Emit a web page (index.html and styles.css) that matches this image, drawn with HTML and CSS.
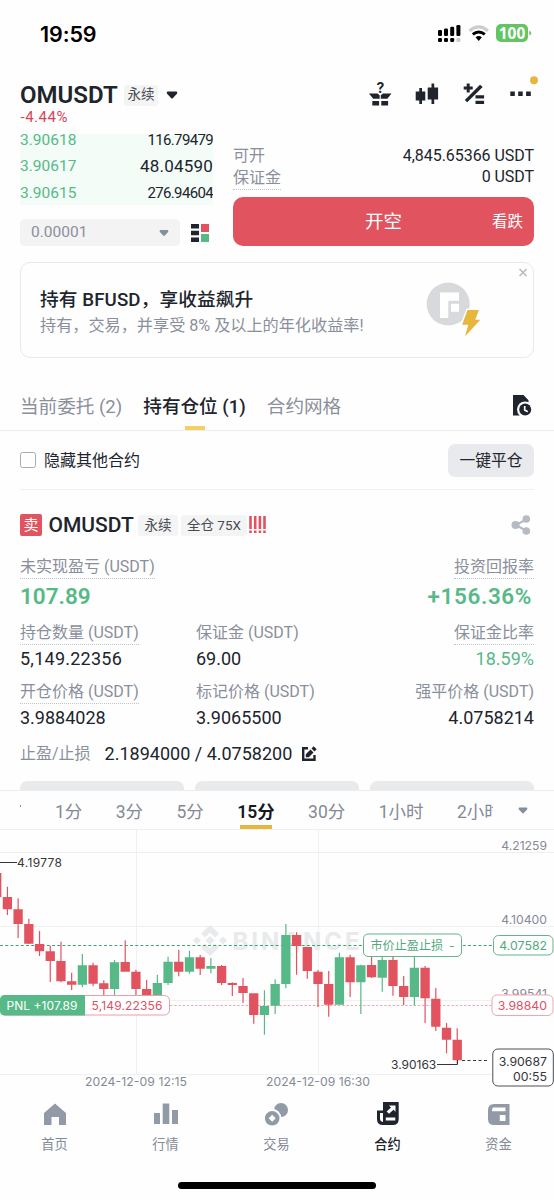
FILE: index.html
```
<!DOCTYPE html>
<html lang="zh-CN">
<head>
<meta charset="utf-8">
<title>OMUSDT 永续</title>
<link rel="stylesheet" href="styles.css">
</head>
<body>
<div class="screen">
  <div class="status">
    <span class="time">19:59</span>
    <svg class="status-icons" viewBox="436 22 98 22" width="98" height="22">
      <g fill="#000"><rect x="438" y="30" width="4" height="6" rx="1.2"/><rect x="444" y="28.5" width="4" height="7.5" rx="1.2"/><rect x="450.200" y="26.800" width="4" height="9.200" rx="1.2"/><rect x="456.400" y="25" width="4" height="11" rx="1.2"/><rect x="438" y="38" width="4" height="4" rx="1.2"/><rect x="444" y="38" width="4" height="4" rx="1.2"/><rect x="450.200" y="38" width="4" height="4" rx="1.2"/></g>
      <rect x="456.400" y="38" width="4" height="4" rx="1.2" fill="#ccc"/>
      <path d="M469.500 30.800Q478.700 23 488 30.800" fill="none" stroke="#ccc" stroke-width="3"/>
      <path d="M472.800 34.400Q478.700 29.600 484.800 34.400" fill="none" stroke="#000" stroke-width="3"/>
      <path d="M475.600 37.200Q478.700 35 481.900 37.200L478.700 41Z"/>
      <rect x="496" y="24" width="32" height="18" rx="5" fill="#62c462"/>
      <path d="M529.300 30.500q2 1 2 2.500t-2 2.500z" fill="#62c462"/>
      <text class="battery" x="512" y="38.700" text-anchor="middle">100</text>
    </svg>
  </div>

  <header class="header">
    <div class="pair">
      <div class="pair-row">
        <h1>OMUSDT</h1><span class="tag">永续</span>
        <svg class="pair-caret" width="12" height="8" viewBox="0 0 12 8"><path d="M1.500.5h9q1.500 1 .4 2.300L7 7Q6 8 5 7L1.100 2.800Q0 1.500 1.500.5z" fill="#20242c"/></svg>
      </div>
      <div class="change">-4.44%</div>
    </div>
    <div class="actions">
      <svg viewBox="368 81 24 26" width="24" height="26"><text class="gift-q" x="380.500" y="93" text-anchor="middle">?</text><g fill="#20242c"><path d="M369 93.500h8.500l2.200 1.800v3.500h-6.500z"/><path d="M391.500 93.500H383l-2.200 1.800v3.500h6.500z"/><rect x="372.300" y="101" width="6.800" height="4.500"/><rect x="381.300" y="101" width="6.800" height="4.500"/></g></svg>
      <svg viewBox="415 81 24 26" width="24" height="26"><path fill="#20242c" d="M415.700 91.500h3.600V88h2.700v3.500h3.300v9H422v3.500h-2.700v-3.500h-3.600zM427.700 87.500h3.800v-4h2.700v4h3.900v12h-3.900v4.500h-2.700v-4.500h-3.800z"/></svg>
      <svg viewBox="462 81 24 26" width="24" height="26"><path fill="#20242c" d="M466.700 83.500h3v3h3v3h-3v3h-3v-3h-3v-3h3zM480 84.800l2.700 2.300-15.500 15.200-2.400-2.200zM475.500 95.300h8.600v3.200h-8.600zM475.500 100.700h8.600v3.200h-8.600z"/></svg>
      <svg viewBox="509 81 24 26" width="24" height="26"><path fill="#20242c" d="M510.300 91.500h4.500V96h-4.500zM518.200 91.500h4.500V96h-4.500zM526.100 91.500h4.700V96h-4.700z"/><circle cx="534" cy="80.300" r="4" fill="#e6b73c"/></svg>
    </div>
  </header>

  <section class="trade">
    <div class="book">
      <div class="bids">
        <div class="bid"><span class="price">3.90618</span><span class="qty">116.79479</span></div>
        <div class="bid"><span class="price">3.90617</span><span class="qty large">48.04590</span></div>
        <div class="bid"><span class="price">3.90615</span><span class="qty">276.94604</span></div>
      </div>
      <div class="depth">
        <div class="precision"><span>0.00001</span><svg width="10" height="8" viewBox="0 0 12 8"><path d="M1.500.5h9q1.500 1 .4 2.300L7 7Q6 8 5 7L1.100 2.800Q0 1.500 1.500.5z" fill="#848e9c"/></svg></div>
        <svg width="18" height="18" viewBox="0 0 18 18"><path fill="#20242c" d="M0 0h8v4.500H0zM0 6.700h8v4.600H0zM0 13.500h8V18H0z"/><path fill="#e25360" d="M10 0h8v8h-8z"/><path fill="#57b987" d="M10 10h8v8h-8z"/></svg>
      </div>
    </div>
    <div class="order">
      <div class="order-row"><span class="muted">可开</span><span>4,845.65366 USDT</span></div>
      <div class="order-row"><span class="muted dotted">保证金</span><span>0 USDT</span></div>
      <div class="short-button"><span></span><span class="short-main">开空</span><span class="short-side">看跌</span></div>
    </div>
  </section>

  <section class="promo">
    <div class="promo-text"><div class="promo-title">持有 BFUSD，享收益飙升</div><div class="promo-sub">持有，交易，并享受 8% 及以上的年化收益率!</div></div>
    <svg class="promo-art" viewBox="424 264 106 92" width="106" height="92">
      <circle cx="448.200" cy="304" r="21.500" fill="#d8d9dc"/>
      <path fill="#fff" d="M440 292.500h19v8.200h-10.700V318H440zM451 303.800h8v8h-8z"/>
      <path fill="#e6b73c" stroke="#fff" stroke-width="3" paint-order="stroke" d="M467.500 310h11.400l-3.600 9.700h5L465 336.500l3.300-11.700h-6.200z"/>
      <path stroke="#b5bac3" stroke-width="1.500" d="M519.500 269l7 7M526.500 269l-7 7"/>
    </svg>
  </section>

  <nav class="tabs">
    <span>当前委托 (2)</span><span class="active">持有仓位 (1)</span><span>合约网格</span>
    <svg class="history" viewBox="511 394 20 23" width="20" height="23"><path fill="#20242c" d="M512 395h10.500l5 5.300v8H527v7.200H512z"/><circle cx="524" cy="409.500" r="8" fill="#fff"/><circle cx="524.200" cy="409.500" r="6" fill="#20242c"/><path d="M523.700 406v4l3 1.700" fill="none" stroke="#fff" stroke-width="1.700"/></svg>
  </nav>

  <div class="filter"><span class="checkbox"></span><span>隐藏其他合约</span><span class="close-all">一键平仓</span></div>

  <section class="position">
    <div class="pos-head">
      <span class="sell">卖</span><span class="pos-name">OMUSDT</span><span class="tag">永续</span><span class="tag lever">全仓 75X</span>
      <svg width="17" height="18" viewBox="0 0 17 18"><path stroke="#e25360" stroke-width="2.600" d="M1.500 0v13M6.200 0v13M10.900 0v13M15.500 0v13M1.500 14.500v2.500M6.200 14.500v2.500M10.900 14.500v2.500M15.500 14.500v2.500"/></svg>
      <svg class="share" width="20" height="20" viewBox="0 0 20 20"><path d="M15.500 4.500L4.500 10l11 5.800" fill="none" stroke="#b5bac3" stroke-width="2.200"/><g fill="#b5bac3"><circle cx="15.300" cy="4" r="3.800"/><circle cx="4.500" cy="10" r="4"/><circle cx="15.300" cy="16" r="3.800"/></g></svg>
    </div>
    <div class="stats top">
      <div class="stat"><span class="label dotted">未实现盈亏 (USDT)</span><span class="value pnl">107.89</span></div>
      <div class="stat right"><span class="label dotted">投资回报率</span><span class="value pnl roi">+156.36%</span></div>
    </div>
    <div class="stats">
      <div class="stat"><span class="label dotted">持仓数量 (USDT)</span><span class="value wide">5,149.22356</span></div>
      <div class="stat"><span class="label">保证金 (USDT)</span><span class="value">69.00</span></div>
      <div class="stat right"><span class="label dotted">保证金比率</span><span class="value up">18.59%</span></div>
    </div>
    <div class="stats">
      <div class="stat"><span class="label dotted">开仓价格 (USDT)</span><span class="value">3.9884028</span></div>
      <div class="stat"><span class="label">标记价格 (USDT)</span><span class="value">3.9065500</span></div>
      <div class="stat right"><span class="label">强平价格 (USDT)</span><span class="value">4.0758214</span></div>
    </div>
    <div class="tpsl"><span class="muted">止盈/止损</span><span class="tpsl-value">2.1894000 / 4.0758200</span>
      <svg width="16" height="16" viewBox="0 0 16 16"><path fill="none" stroke="#20242c" stroke-width="2.400" d="M7 2.200H2.200v11.600h11.300V9"/><path fill="#20242c" d="M4.800 11.200v-3l4.700-4.700 3 3-4.700 4.700zM10.500 2.500L12.700.3l3 3-2.200 2.200z"/></svg>
    </div>
    <div class="pos-buttons"><i></i><i></i><i></i></div>
  </section>

  <div class="intervals">
    <i class="tick"></i>
    <div class="interval-list"><span>1分</span><span>3分</span><span>5分</span><span class="active">15分</span><span>30分</span><span>1小时</span><span>2小时</span></div>
    <svg width="10" height="7" viewBox="0 0 12 8"><path d="M1.500.5h9q1.500 1 .4 2.300L7 7Q6 8 5 7L1.100 2.800Q0 1.500 1.500.5z" fill="#848e9c"/></svg>
  </div>

  <svg class="chart" viewBox="0 830 554 262" width="554" height="262">
    <path class="grid" d="M0 852.500H554M0 926.500H554M0 1000.500H554M0 1074.500H554M136.500 830V1074M318.500 830V1074"/>
    <g fill="#e9eaec"><path d="M210 925l9 8.500-4 4-5-4.700-5 4.700-4-4zM210 956l9-8.500-4-4-5 4.700-5-4.700-4 4zM210 936l4.500 4.500-4.500 4.500-4.500-4.500zM197 936.500l4 4-4 4-4-4zM223 936.500l4 4-4 4-4-4z"/><text class="watermark" x="232.500" y="949.500" textLength="127">BINANCE</text></g>
    <path stroke="#3fa66f" stroke-width="1" stroke-dasharray="3 2.200" d="M0 945.500H494"/>
    <path stroke="#f0a9b0" stroke-dasharray="2.500 1.700" d="M170 1005.500H492"/>
    <g id="candles"></g>
    <path stroke="#33363c" d="M0 862.500H17M437 1064.500h20.500V1060" fill="none"/>
    <path stroke="#33363c" stroke-dasharray="3 2.500" d="M462 1060.500h25"/>
    <text class="mark" x="17" y="867" textLength="45">4.19778</text>
    <text class="mark" x="391" y="1069">3.90163</text>
    <g class="axis"><text x="547" y="850" text-anchor="end">4.21259</text><text x="547" y="923.500" text-anchor="end">4.10400</text><text x="547" y="997.500" text-anchor="end">3.99541</text><text x="136" y="1086" text-anchor="middle" textLength="102">2024-12-09 12:15</text><text x="318" y="1086" text-anchor="middle" textLength="104">2024-12-09 16:30</text></g>
    <rect x="363.500" y="934" width="98" height="22.500" rx="4.500" fill="#fff" stroke="#62b58b"/>
    <text class="order-text" x="370.500" y="950">市价止盈止损</text><text class="order-text" x="449" y="950">-</text>
    <rect x="493.500" y="935.500" width="59.500" height="19.500" rx="5" fill="#fff" stroke="#62b58b"/>
    <text class="price-tag" x="547" y="950" text-anchor="end" fill="#52aa7e">4.07582</text>
    <rect x="492" y="995" width="61" height="20.500" rx="5" fill="#fff" stroke="#f0a4ae"/>
    <text class="price-tag" x="547" y="1010" text-anchor="end" fill="#dc5266">3.98840</text>
    <rect x="492.800" y="1049" width="60.500" height="37" rx="5" fill="#fff" stroke="#4b4e55"/>
    <text class="price-tag" x="547" y="1065.500" text-anchor="end" fill="#33363c">3.90687</text>
    <text class="price-tag" x="547" y="1080.500" text-anchor="end" fill="#33363c">00:55</text>
    <rect x=".5" y="995.500" width="169" height="19.500" rx="5" fill="#fff" stroke="#eb9da9"/>
    <path fill="#57b987" d="M85 995v20.500H5q-5 0-5-5V1000q0-5 5-5z"/>
    <text class="tag-text" x="6.500" y="1010" fill="#fff" textLength="71">PNL +107.89</text>
    <text class="tag-text" x="91.500" y="1010" fill="#dc5266" textLength="71">5,149.22356</text>
  </svg>

  <nav class="bottom">
    <div><svg viewBox="43 1101 24 26" width="24" height="26"><path fill="#929aa7" d="M55 1103.500l11 9.500v12h-7v-8h-7.500v8H44v-12z"/></svg><span>首页</span></div>
    <div><svg viewBox="154 1101 24 26" width="24" height="26"><path fill="#929aa7" d="M154 1113h6v11h-6zM162.700 1103.500h6.600v20.500h-6.600zM172 1110h6v14h-6z"/></svg><span>行情</span></div>
    <div><svg viewBox="265 1101 24 26" width="24" height="26"><circle cx="281" cy="1110" r="7" fill="#929aa7"/><circle cx="272" cy="1118" r="9.300" fill="#fff"/><circle cx="272.200" cy="1118.300" r="7.300" fill="#929aa7"/><path fill="#fff" d="M272.200 1114.800l3.500 3.500-3.500 3.500-3.500-3.500z"/></svg><span>交易</span></div>
    <div class="current"><svg viewBox="375 1101 24 26" width="24" height="26"><path fill="#20242c" d="M382 1102h15.700v17q0 6-6 6H382q-6 0-6-6v-8.500h6z"/><path fill="#fff" d="M379 1113h3v9q-3-.5-3-3.500zM384.800 1117.500h9.500v3h-9.500zM388 1105.500h6.500v6.300l-2-2-4.500 4-2.300-2.300 4.300-4z"/></svg><span>合约</span></div>
    <div><svg viewBox="486 1101 24 26" width="24" height="26"><path fill="#929aa7" d="M493 1104h15.500v21H493q-6 0-6-6v-9q0-6 6-6z"/><path fill="#fff" d="M492.500 1107.500h12v3.800h-13.500q0-3.800 1.500-3.800zM498.800 1115h5.700v6h-5.700z"/></svg><span>资金</span></div>
  </nav>
  <div class="home-bar"></div>
</div>
<script src="chart.js"></script>
</body>
</html>
```
FILE: styles.css
```
* { box-sizing: border-box; }
body { margin: 0; background: #fff; }
.screen { width: 554px; height: 1200px; overflow: hidden; background: #fefefe; color: #20242c; font-family: Roboto, "Noto Sans CJK SC", sans-serif; font-size: 16px; line-height: 1; white-space: nowrap; display: flex; flex-direction: column; }
.screen > * { flex: none; }
svg { display: block; flex: none; }
.muted { color: #8a8f9c; }

.status { height: 68px; padding: 22px 20px 0 40px; display: flex; justify-content: space-between; align-items: flex-start; }
.time { font: 600 21.500px/24px Inter, sans-serif; color: #000; letter-spacing: -.1px; }
.battery { font: 700 15.500px "Open Sans", sans-serif; fill: #fff; }

.header { height: 66px; padding: 13px 21px 0 20px; display: flex; justify-content: space-between; align-items: flex-start; }
.pair-row { display: flex; align-items: center; height: 28px; }
.pair h1 { margin: 0; font-size: 24px; font-weight: 600; width: 104px; }
.tag { background: #f4f4f5; border-radius: 3px; font-size: 13.500px; color: #474b54; height: 21px; width: 34px; display: flex; align-items: center; justify-content: center; }
.pair-caret { margin-left: 8px; }
.change { color: #d9435a; font-size: 15px; height: 18px; line-height: 16px; letter-spacing: .9px; letter-spacing: .5px; margin-left: .5px; }
.actions { display: flex; gap: 23px; }
.actions svg { overflow: visible; }
.gift-q { font: 700 14px Inter, sans-serif; fill: #20242c; }

.trade { height: 128px; padding: 0 20px; display: flex; }
.book { width: 193px; }
.bids { height: 71px; background: #f3fcf7; overflow: hidden; display: flex; flex-direction: column; justify-content: flex-end; }
.bid { height: 26.500px; flex: none; display: flex; align-items: center; justify-content: space-between; padding-top: 3px; }
.price { color: #57b987; font-size: 15.500px; }
.qty { font-size: 15px; letter-spacing: -.65px; }
.qty.large { font-size: 17px; letter-spacing: .2px; }
.depth { display: flex; align-items: center; justify-content: space-between; margin-top: 14px; padding-right: 4px; }
.precision { width: 160px; height: 27px; background: #f3f3f4; border-radius: 5px; padding: 1px 11px 0; display: flex; align-items: center; justify-content: space-between; color: #8a8f9c; font-size: 15.500px; }
.order { flex: 1; margin-left: 20px; padding-top: 11px; }
.order-row { display: flex; justify-content: space-between; align-items: center; height: 21px; letter-spacing: -.05px; }
.order-row .dotted { height: 24px; line-height: 23px; margin-top: 2px; }
.dotted { border-bottom: 1px dotted #bfc3ca !important; }
.short-button { margin-top: 10px; height: 49px; width: 301px; border-radius: 10px; background: #e1535f; color: #fff; display: grid; grid-template-columns: 1fr auto 1fr; align-items: center; padding: 2px 11px 0; }
.short-main { font-size: 18.500px; }
.short-side { text-align: right; font-size: 15.500px; }

.promo { margin: 0 20px; height: 96px; border: 1px solid #e8e9ec; border-radius: 10px; display: flex; justify-content: space-between; padding-left: 19px; padding-right: 3px; align-items: center; }
.promo-text { padding-top: 5px; }
.promo-title { font-size: 18.700px; line-height: 26px; font-weight: 500; letter-spacing: .1px; }
.promo-sub { color: #8a8f9c; line-height: 26px; font-size: 16.150px; }

.tabs { height: 73px; padding: 26px 22px 0 20px; display: flex; gap: 21px; border-bottom: 1px solid #ebecee; font-size: 18.600px; color: #8a8f9c; font-weight: 400; }
.tabs span { line-height: 46px; height: 46px; }
.tabs .active { color: #20242c; font-weight: 500; display: flex; flex-direction: column; align-items: center; }
.tabs .active::after { content: ""; width: 20px; height: 4px; margin-top: -4px; background: #f2d061; flex: none; }
.history { margin-left: auto; margin-top: 10px; }

.filter { margin: 0 20px; height: 59px; border-bottom: 1px solid #f0f0f2; display: flex; align-items: center; font-size: 16px; }
.filter > span:nth-child(2) { padding-top: 1px; }
.checkbox { width: 16px; height: 16px; border: 1.500px solid #a5aab3; border-radius: 2.500px; margin-right: 8px; }
.close-all { margin-left: auto; width: 86px; height: 33px; border-radius: 7px; background: #e9eaed; display: flex; align-items: center; justify-content: center; font-size: 15.800px; padding-top: 1px; }

.position { height: 300px; padding: 16px 20px 0; overflow: hidden; }
.pos-head { display: flex; align-items: center; height: 38px; }
.sell { width: 22px; height: 22px; background: #e1535f; color: #fff; border-radius: 2px; font-size: 15px; display: flex; align-items: center; justify-content: center; margin-right: 6.500px; }
.pos-name { font-size: 21px; font-weight: 500; width: 89.500px; padding-top: 1px; }
.pos-head .tag { width: 40px; padding-top: 1px; }
.pos-head .lever { width: 66px; margin: 0 2px 0 3px; }
.share { margin-left: auto; margin-right: 3px; }
.stats { display: grid; grid-template-columns: 176px 1fr auto; height: 60px; padding-top: 8px; }
.stats.top { height: 69px; padding-top: 11px; grid-template-columns: 1fr auto; }
.stats + .stats { padding-top: 7px; }
.stats.top + .stats { padding-top: 8px; }
.stat { display: flex; flex-direction: column; align-items: flex-start; }
.right { align-items: flex-end; }
.label { color: #8a8f9c; font-size: 16px; line-height: 24px; height: 24px; flex: none; border-bottom: 1px solid transparent; }
.value { font-size: 18px; line-height: 28px; height: 28px; }
.wide { letter-spacing: .25px; }
.up { color: #57b987; }
.pnl { color: #57b987; font-size: 22.500px; font-weight: 600; line-height: 35px; height: 35px; }
.roi { padding-right: 2px; letter-spacing: .6px; }
.tpsl { display: flex; align-items: center; height: 36px; margin-top: 2px; padding-top: 1px; }
.tpsl-value { font-size: 18px; margin: 0 9px 0 14px; }
.pos-buttons { display: grid; grid-template-columns: repeat(3, 1fr); gap: 11px; margin-top: 10px; }
.pos-buttons i { height: 34px; background: #e9eaec; border-radius: 7px; }

.intervals { height: 40px; border-top: 1px solid #ebecee; border-bottom: 1px solid #f0f0f2; padding: 0 26px 0 20px; display: flex; align-items: center; }
.intervals > svg { margin-left: auto; }
.tick { width: 1px; height: 2px; background: #848a96; margin: -8px 34px 0 0; }
.interval-list { width: 438px; height: 38px; overflow: hidden; display: flex; gap: 33.400px; font-size: 17.500px; color: #848a96; }
.interval-list span { flex: none; line-height: 42px; height: 38px; }
.interval-list .active { color: #15181e; font-weight: 600; display: flex; flex-direction: column; align-items: center; }
.interval-list .active::after { content: ""; width: 32px; height: 4px; margin-top: -8px; background: #e6b73c; flex: none; }

.chart { font-family: Inter, "Noto Sans CJK SC", sans-serif; }
.grid { stroke: #f0f0f1; fill: none; }
.watermark { font-size: 24px; font-weight: 700; }
.mark { font-size: 12px; fill: #33363c; }
.axis { font-size: 12.200px; fill: #858a96; }
.order-text { font-size: 12.100px; fill: #52aa7e; }
.price-tag { font-size: 12.300px; }
.tag-text { font-size: 12px; }

.bottom { display: grid; grid-template-columns: repeat(5, 1fr); height: 90px; padding-top: 9px; margin-left: -1px; }
.bottom div { display: flex; flex-direction: column; align-items: center; font-size: 13.200px; color: #858a96; }
.bottom span { margin-top: 11px; }
.bottom .current { color: #20242c; font-weight: 500; }
.home-bar { width: 198px; height: 7px; border-radius: 4px; background: #000; margin: 0 auto; }
```
FILE: chart.js
```
// Each row: direction, body top, body bottom, wick top, wick bottom.
const candles = [
  ["d", 873, 897, 870, 897], ["d", 897, 909.3, 886.7, 915], ["d", 909.3, 924, 898.3, 938],
  ["d", 924, 943.7, 918.7, 944], ["d", 944, 951.3, 931, 956], ["d", 951.3, 961, 945.7, 982],
  ["d", 961, 981.3, 941.7, 982.3], ["d", 981.3, 984.7, 972.7, 990], ["u", 965.3, 984.7, 954, 987.3],
  ["d", 965.3, 983.7, 962.7, 986.3], ["d", 983.3, 989, 980.3, 995], ["u", 962.3, 989, 960, 995],
  ["d", 962, 971.7, 940.3, 971.7], ["d", 971.7, 989, 969.7, 995], ["d", 989, 995, 980, 995],
  ["u", 983, 995, 974.7, 995], ["u", 961.7, 983, 956.7, 985], ["d", 961.7, 971.7, 949.7, 976.3],
  ["u", 957.3, 971.7, 950.7, 973.7], ["d", 957.3, 968.7, 955, 975], ["u", 966, 968.7, 958, 973.3],
  ["d", 966, 983, 965, 985], ["d", 983, 985, 982.3, 996], ["d", 986, 993, 978, 1003],
  ["d", 993.3, 1015, 993.3, 1023.7], ["u", 1006, 1015, 990.3, 1034.7], ["u", 984, 1005.7, 979.3, 1014],
  ["u", 935, 984, 924, 988.3], ["d", 935, 946, 932.3, 974.7], ["d", 947, 971, 947, 978.7],
  ["d", 971.7, 984, 970, 1007], ["d", 984, 1004.7, 971, 1016.7], ["u", 957.3, 1004.7, 952.7, 1004.7],
  ["d", 957.3, 982.3, 954.7, 997], ["u", 965.3, 982.3, 964.7, 1014], ["d", 965, 977.3, 950, 978],
  ["u", 960, 977.7, 950, 991.7], ["d", 960, 986, 950, 995.7], ["d", 986, 997, 976, 1005],
  ["u", 967.7, 997, 950, 1005.7], ["d", 967.7, 998.3, 966, 1023], ["d", 998.7, 1026.7, 988, 1031],
  ["d", 1027.7, 1039.7, 1023, 1053.3], ["d", 1039.7, 1060.3, 1028.3, 1063.7]
];
const group = document.getElementById("candles");
candles.forEach(([dir, top, bottom, high, low], i) => {
  const x = -3.3 + i * 10.71;
  const path = document.createElementNS("http://www.w3.org/2000/svg", "path");
  path.setAttribute("fill", dir === "u" ? "#57b987" : "#e25360");
  path.setAttribute("d", `M${x - 4.65} ${top}h9.300V${bottom}h-9.300zM${x - 0.6} ${high}h1.200V${low}h-1.200z`);
  group.appendChild(path);
});
```
